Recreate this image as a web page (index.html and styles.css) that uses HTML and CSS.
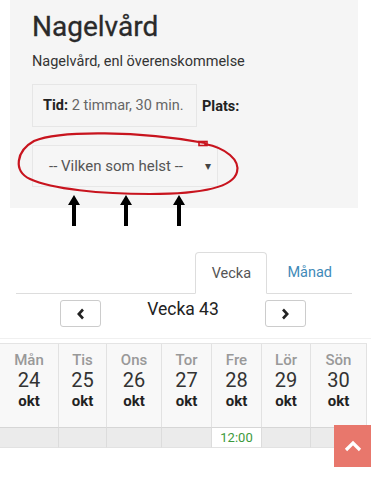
FILE: index.html
```html
<!DOCTYPE html>
<html lang="sv">
<head>
<meta charset="utf-8">
<title>Nagelvård</title>
<link rel="stylesheet" href="styles.css">
</head>
<body>
<section class="panel">
  <h1 class="title">Nagelvård</h1>
  <p class="subtitle">Nagelvård, enl överenskommelse</p>
  <div class="info">
    <div class="info-box"><b>Tid:</b> <span class="muted">2 timmar, 30 min.</span></div>
    <b class="plats">Plats:</b>
  </div>
  <div class="select">
    <span>-- Vilken som helst --</span>
    <span class="caret">&#9662;</span>
  </div>
</section>

<svg class="annotation" width="371" height="240" viewBox="0 0 371 240">
  <path d="M205 144 C226 148 240 160 237 172 C233 188 200 194 150 194 C100 194 52 189 30 179 C13 171 16 151 34 141 C60 130 140 131 205 143" fill="none" stroke="#c8141e" stroke-width="2.2" stroke-linecap="round"/>
  <rect x="199" y="141.5" width="8" height="4" fill="none" stroke="#c8141e" stroke-width="1.6"/>
  <g fill="#000">
    <polygon points="74,195 68,205 80,205"/><rect x="72" y="204" width="4" height="22"/>
    <polygon points="126,195 120,205 132,205"/><rect x="124" y="204" width="4" height="22"/>
    <polygon points="179,195 173,205 185,205"/><rect x="177" y="204" width="4" height="22"/>
  </g>
</svg>

<section class="calendar">
  <nav class="tabs">
    <span class="tab active">Vecka</span>
    <span class="tab link">Månad</span>
  </nav>
  <div class="weeknav">
    <button class="navbtn" aria-label="Föregående">
      <svg width="10" height="12" viewBox="0 0 10 12"><path d="M7 1.5 L2.8 6 L7 10.5" fill="none" stroke="#222" stroke-width="2.6"/></svg>
    </button>
    <span class="weeklabel">Vecka 43</span>
    <button class="navbtn" aria-label="Nästa">
      <svg width="10" height="12" viewBox="0 0 10 12"><path d="M3 1.5 L7.2 6 L3 10.5" fill="none" stroke="#222" stroke-width="2.6"/></svg>
    </button>
  </div>
</section>

<div class="rule"></div>

<div class="week">
  <div class="day"><span class="dname">Mån</span><span class="dnum">24</span><span class="dmon">okt</span></div>
  <div class="day"><span class="dname">Tis</span><span class="dnum">25</span><span class="dmon">okt</span></div>
  <div class="day"><span class="dname">Ons</span><span class="dnum">26</span><span class="dmon">okt</span></div>
  <div class="day"><span class="dname">Tor</span><span class="dnum">27</span><span class="dmon">okt</span></div>
  <div class="day"><span class="dname">Fre</span><span class="dnum">28</span><span class="dmon">okt</span></div>
  <div class="day"><span class="dname">Lör</span><span class="dnum">29</span><span class="dmon">okt</span></div>
  <div class="day"><span class="dname">Sön</span><span class="dnum">30</span><span class="dmon">okt</span></div>
  <div class="slot"></div>
  <div class="slot"></div>
  <div class="slot"></div>
  <div class="slot"></div>
  <div class="slot free">12:00</div>
  <div class="slot"></div>
  <div class="slot"></div>
</div>

<button class="totop" aria-label="Till toppen">
  <svg width="18" height="12" viewBox="0 0 18 12"><path d="M2 10 L9 3 L16 10" fill="none" stroke="#fff" stroke-width="3.2"/></svg>
</button>
</body>
</html>
```

FILE: styles.css
```css
html, body {
  margin: 0;
  padding: 0;
  background: #fff;
  font-family: Roboto, "Liberation Sans", Arial, sans-serif;
  color: #333;
  width: 371px;
  height: 480px;
  overflow: hidden;
  position: relative;
}

.panel {
  margin-left: 10px;
  width: 348px;
  height: 208px;
  box-sizing: border-box;
  padding: 10px 22px 0;
  background: #f5f5f5;
}

.title {
  margin: 0;
  font-size: 28px;
  line-height: 34px;
  font-weight: 400;
  color: #2a2a2a;
  -webkit-text-stroke: 0.3px #2a2a2a;
}

.subtitle {
  margin: 8px 0 0;
  font-size: 14.5px;
  line-height: 20px;
  color: #333;
}

.info {
  margin-top: 12px;
  display: flex;
  align-items: center;
  gap: 5px;
  font-size: 14.5px;
}

.info-box {
  width: 165px;
  height: 43px;
  box-sizing: border-box;
  border: 1px solid #e6e6e6;
  padding-left: 10px;
  line-height: 42px;
  color: #222;
}

.muted { color: #666; }
.plats { color: #222; padding-top: 1px; }

.select {
  margin-top: 18px;
  width: 186px;
  height: 42px;
  box-sizing: border-box;
  border: 1px solid #e7e7e7;
  background: #f6f6f6;
  padding: 0 6px 0 16px;
  display: flex;
  align-items: center;
  justify-content: space-between;
  font-size: 15px;
  color: #555;
}

.caret {
  font-size: 12px;
  color: #444;
}

.annotation {
  position: absolute;
  left: 0;
  top: 0;
}

.calendar {
  margin: 44px 19px 0 16px;
}

.tabs {
  display: flex;
  justify-content: flex-end;
  border-bottom: 1px solid #ddd;
  height: 41px;
}

.tab {
  font-size: 14.5px;
  line-height: 41px;
  padding: 0 20px;
}

.tab.active {
  width: 72px;
  box-sizing: border-box;
  padding: 0;
  text-align: center;
  color: #555;
  border: 1px solid #ddd;
  border-bottom-color: #fff;
  border-radius: 4px 4px 0 0;
  background: #fff;
  height: 42px;
}

.tab.link { color: #3f8ab8; }

.weeknav {
  display: flex;
  justify-content: space-between;
  align-items: flex-start;
  padding: 6px 46px 0 44px;
  height: 37px;
  box-sizing: border-box;
}

.navbtn {
  width: 41px;
  height: 27px;
  border: 1px solid #ccc;
  border-radius: 3px;
  background: #fff;
  display: flex;
  align-items: center;
  justify-content: center;
  padding: 0;
}

.weeklabel {
  font-size: 17.5px;
  line-height: 18px;
  color: #222;
}

.rule {
  height: 1px;
  background: #f0f0f0;
  margin-top: 7px;
}

.week {
  margin-top: 4px;
  display: grid;
  grid-template-columns: 59px 48px 55px 50px 50px 49px 56px;
  width: 367px;
  border-top: 1px solid #e4e4e4;
}

.day {
  height: 83px;
  background: #f8f8f8;
  border-right: 1px solid #e2e2e2;
  display: flex;
  flex-direction: column;
  align-items: center;
  padding-top: 7px;
  box-sizing: border-box;
}

.dname {
  font-size: 15px;
  line-height: 18px;
  color: #999;
  font-weight: 500;
}

.dnum {
  font-size: 20px;
  line-height: 22px;
  color: #333;
}

.dmon {
  font-size: 15px;
  line-height: 20px;
  font-weight: 700;
  color: #222;
}

.slot {
  height: 19px;
  background: #ebebeb;
  border-top: 1px solid #d6d6d6;
  border-right: 1px solid #dcdcdc;
  border-bottom: 1px solid #e2e2e2;
  font-size: 13px;
  line-height: 19px;
  text-align: center;
}

.slot.free {
  background: #fff;
  color: #3c9a3c;
}

.totop {
  position: absolute;
  right: 0;
  top: 425px;
  width: 37px;
  height: 42px;
  border: none;
  background: #e8776c;
  display: flex;
  align-items: center;
  justify-content: center;
  padding: 0;
}
```
